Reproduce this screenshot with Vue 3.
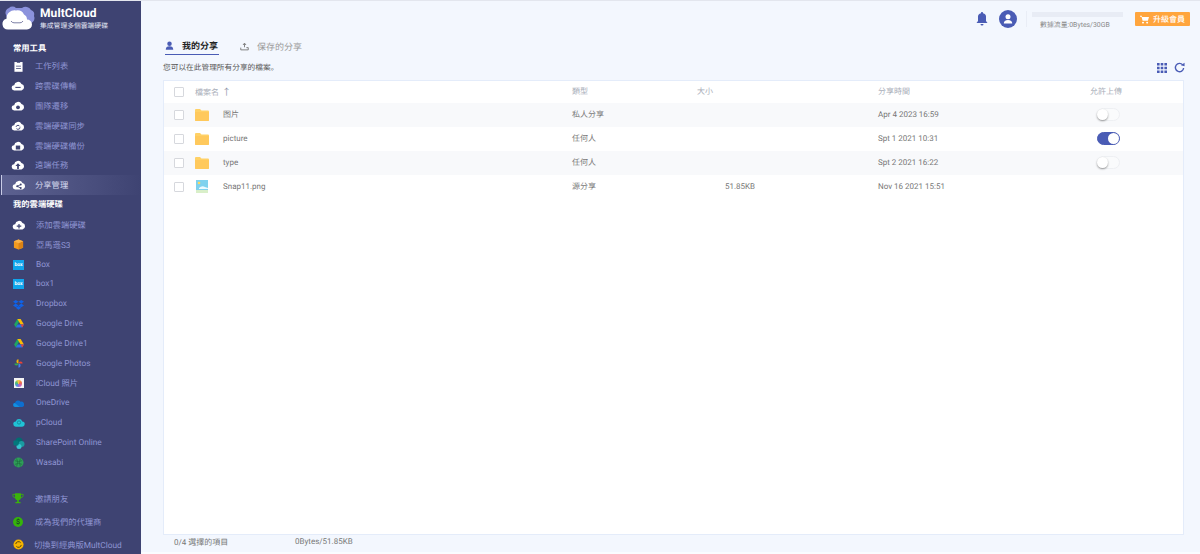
<script setup>
const cloud = 'M4 13a3 3 0 0 1-.4-6A4.5 4.5 0 0 1 12 5.6 3.8 3.8 0 0 1 12 13z'
const tools = [
  { t: '工作列表', i: 'list' },
  { t: '跨雲碟傳輸', i: 'transfer' },
  { t: '團隊遷移', i: 'team' },
  { t: '雲端硬碟同步', i: 'sync' },
  { t: '雲端硬碟備份', i: 'backup' },
  { t: '遠端任務', i: 'up' },
  { t: '分享管理', i: 'share', active: true },
]
const drives = [
  { t: '添加雲端硬碟', i: 'add' },
  { t: '亞馬遜S3', i: 's3' },
  { t: 'Box', i: 'box' },
  { t: 'box1', i: 'box' },
  { t: 'Dropbox', i: 'dropbox' },
  { t: 'Google Drive', i: 'gdrive' },
  { t: 'Google Drive1', i: 'gdrive' },
  { t: 'Google Photos', i: 'photos' },
  { t: 'iCloud 照片', i: 'icloud' },
  { t: 'OneDrive', i: 'onedrive' },
  { t: 'pCloud', i: 'pcloud' },
  { t: 'SharePoint Online', i: 'sharepoint' },
  { t: 'Wasabi', i: 'wasabi' },
]
const extras = [
  { t: '邀請朋友', i: 'trophy' },
  { t: '成為我們的代理商', i: 'dollar' },
  { t: '切換到經典版MultCloud', i: 'switch' },
]
const files = [
  { name: '图片', kind: 'folder', type: '私人分享', size: '', time: 'Apr 4 2023 16:59', toggle: false },
  { name: 'picture', kind: 'folder', type: '任何人', size: '', time: 'Spt 1 2021 10:31', toggle: true },
  { name: 'type', kind: 'folder', type: '任何人', size: '', time: 'Spt 2 2021 16:22', toggle: false },
  { name: 'Snap11.png', kind: 'image', type: '源分享', size: '51.85KB', time: 'Nov 16 2021 15:51', toggle: null },
]
</script>

<template>
  <div class="app">
    <aside class="sidebar">
      <div class="logo">
        <svg class="logo-mark" viewBox="0 0 36 30" width="36" height="30">
          <path d="M5 14a5 5 0 0 1 3-7 5 5 0 0 1 7 0h6a6 6 0 0 1 9 2 5 5 0 0 1 3 6 5 5 0 0 1-3 7H8z" fill="#8b92dc" />
          <path d="M7 28.500a5.500 5.500 0 0 1-1.500-10.800A8 8 0 0 1 15 9.500a7.500 7.500 0 0 1 8 4 5.500 5.500 0 0 1 3 5 5 5 0 0 1 0 10z" fill="#fff" />
          <path d="M10 20q1 1.800 3 1.800h6q2 0 3-1.800" fill="none" stroke="#7d80a6" stroke-width="1" />
        </svg>
        <div class="logo-text">
          <div class="brand">MultCloud</div>
          <div class="slogan">集成管理多個雲端硬碟</div>
        </div>
      </div>

      <div class="section">常用工具</div>
      <div v-for="item in tools" :key="item.t" class="nav tool" :class="{ active: item.active }">
        <span class="nav-icon">
          <svg v-if="item.i === 'list'" viewBox="0 0 16 16" width="13" height="13">
            <path d="M3 2.500h10v12H3z" fill="#fff" />
            <path d="M6 1.500h4v2H6zM5 7h6v1H5zM5 10h6v1H5z" fill="#3e4372" />
          </svg>
          <svg v-else viewBox="0 0 16 16" width="14" height="14">
            <path :d="cloud" fill="#fff" />
            <path v-if="item.i === 'transfer'" d="M5 9h6v1.200H5z" fill="#3e4372" />
            <circle v-if="item.i === 'team'" cx="8" cy="9.500" r="2.200" fill="#3e4372" />
            <circle v-if="item.i === 'sync'" cx="8" cy="9.500" r="2.300" fill="none" stroke="#3e4372" stroke-width="1.100" stroke-dasharray="5 2" />
            <path v-if="item.i === 'backup'" d="M5.500 7.500h5v4.500h-5z" fill="#3e4372" />
            <path v-if="item.i === 'up'" d="M8 6l3 3H9v3.500H7V9H5z" fill="#3e4372" />
            <path v-if="item.i === 'share'" d="M6 9.500l4-2M6 9.500l4 2" stroke="#3e4372" stroke-width="1" fill="none" />
            <g v-if="item.i === 'share'" fill="#3e4372"><circle cx="6" cy="9.500" r="1.200" /><circle cx="10" cy="7.500" r="1.100" /><circle cx="10" cy="11.500" r="1.100" /></g>
          </svg>
        </span>
        <span class="nav-label">{{ item.t }}</span>
      </div>

      <div class="section section-2">我的雲端硬碟</div>
      <div v-for="item in drives" :key="item.t" class="nav">
        <span class="nav-icon">
          <svg v-if="item.i === 'add'" viewBox="0 0 16 16" width="14" height="14">
            <path :d="cloud" fill="#fff" />
            <path d="M7.300 6.800h1.400v1.900h1.900v1.400H8.700V12H7.300v-1.900H5.400V8.700h1.900z" fill="#3e4372" />
          </svg>
          <svg v-else-if="item.i === 's3'" viewBox="0 0 12 12" width="11" height="11">
            <path d="M6 .5l5 2v7l-5 2-5-2v-7z" fill="#f29a1f" />
            <path d="M6 4.500l5-2v7l-5 2z" fill="#db8215" />
            <path d="M1 2.500l5 2 5-2-5-2z" fill="#f9b24a" />
          </svg>
          <span v-else-if="item.i === 'box'" class="box-tile">box</span>
          <svg v-else-if="item.i === 'dropbox'" viewBox="0 0 12 12" width="11" height="11" fill="#0f62e8">
            <path d="M3 1l3 2-3 2-3-2zM9 1l3 2-3 2-3-2zM3 5l3 2-3 2-3-2zM9 5l3 2-3 2-3-2zM6 7.600l3 2-3 2-3-2z" />
          </svg>
          <svg v-else-if="item.i === 'gdrive'" viewBox="0 0 12 11" width="10" height="9">
            <path d="M4 0h4L4.200 6.800l-2 3.700L0 6.800z" fill="#1fa463" />
            <path d="M4 0h4l4 6.800H8z" fill="#fbbc04" />
            <path d="M2 10.500L4.200 6.800H12l-2 3.700z" fill="#2a71e6" />
            <path d="M8 6.800h4l-2 3.700z" fill="#ea4335" />
          </svg>
          <svg v-else-if="item.i === 'photos'" viewBox="0 0 12 12" width="9" height="9">
            <path d="M6 6V0.500A2.750 2.750 0 0 0 3.200 3.200 2.750 2.750 0 0 0 6 6z" fill="#f4b400" />
            <path d="M6 6h5.500A2.750 2.750 0 0 0 8.800 3.200 2.750 2.750 0 0 0 6 6z" fill="#ea4335" />
            <path d="M6 6v5.500A2.750 2.750 0 0 0 8.800 8.800 2.750 2.750 0 0 0 6 6z" fill="#4285f4" />
            <path d="M6 6H.5a2.750 2.750 0 0 0 2.700 2.800A2.750 2.750 0 0 0 6 6z" fill="#34a853" />
          </svg>
          <span v-else-if="item.i === 'icloud'" class="icloud-tile"><i></i></span>
          <svg v-else-if="item.i === 'onedrive'" viewBox="0 0 16 10" width="11" height="7">
            <path d="M3 10a3 3 0 0 1 0-6 4.500 4.500 0 0 1 8-1.500A3.500 3.500 0 0 1 13.500 10z" fill="#0d6fd0" />
            <path d="M3 10a3 3 0 0 1-.5-5.800L10 10z" fill="#1490df" />
          </svg>
          <svg v-else-if="item.i === 'pcloud'" viewBox="0 0 16 11" width="12" height="9">
            <path d="M4 11a3.500 3.500 0 0 1-.3-7 4.500 4.500 0 0 1 8.600 0 3.500 3.500 0 0 1-.3 7z" fill="#20c3d6" />
            <circle cx="8" cy="5.500" r="2.200" fill="none" stroke="#137d90" stroke-width="1" />
          </svg>
          <svg v-else-if="item.i === 'sharepoint'" viewBox="0 0 12 12" width="12" height="12">
            <circle cx="6" cy="4" r="3.500" fill="#036c70" />
            <circle cx="8.500" cy="7" r="3" fill="#1a9ba1" />
            <circle cx="6" cy="9.500" r="2.500" fill="#37c6d0" />
            <rect x="0.500" y="3.500" width="5" height="5" rx="0.800" fill="#03787c" />
          </svg>
          <svg v-else-if="item.i === 'wasabi'" viewBox="0 0 12 12" width="11" height="11">
            <circle cx="6" cy="6" r="5.500" fill="#2f9e59" />
            <path d="M2 4q4 2 8 0M2 8q4-2 8 0M4 1.500q2 4 0 9M8 1.500q-2 4 0 9" stroke="#1e6f3e" stroke-width=".8" fill="none" />
          </svg>
        </span>
        <span class="nav-label">{{ item.t }}</span>
      </div>

      <div class="extras">
        <div v-for="item in extras" :key="item.t" class="nav extra">
          <span class="nav-icon">
            <svg v-if="item.i === 'trophy'" viewBox="0 0 14 12" width="12" height="11">
              <path d="M3.500 0h7v4.500a3.500 3.500 0 0 1-7 0zM6 7.500h2V10h2v1.500H4V10h2z" fill="#3bb30b" />
              <path d="M3.500 1.200H1v1.500q0 2 3 2.500M10.500 1.200H13v1.500q0 2-3 2.500" stroke="#3bb30b" fill="none" />
            </svg>
            <span v-else-if="item.i === 'dollar'" class="coin green">$</span>
            <svg v-else viewBox="0 0 12 12" width="11" height="11">
              <circle cx="6" cy="6" r="5.500" fill="#f5b301" />
              <path d="M3 5.500a3 3 0 0 1 5.300-1.500M9 6.500a3 3 0 0 1-5.300 1.500" stroke="#4a3d10" fill="none" />
            </svg>
          </span>
          <span class="nav-label" :class="{ 'switch-label': item.i === 'switch' }">{{ item.t }}</span>
        </div>
      </div>
    </aside>

    <main class="main">
      <header class="topbar">
        <svg class="bell" viewBox="0 0 12 14" width="12" height="14">
          <path d="M6 0a1 1 0 0 1 1 1.200A4 4 0 0 1 10 5.500V9l1.500 2h-11L2 9V5.500a4 4 0 0 1 3-4.300A1 1 0 0 1 6 0zM4.500 12h3a1.500 1.500 0 0 1-3 0z" fill="#4a5cb5" />
        </svg>
        <svg class="avatar" viewBox="0 0 18 18" width="18" height="18">
          <circle cx="9" cy="9" r="9" fill="#4a5cb5" />
          <circle cx="9" cy="6.800" r="2.500" fill="#fff" />
          <path d="M4.800 13.500q0-3.500 4.200-3.500t4.200 3.500z" fill="#fff" />
        </svg>
        <div class="divider"></div>
        <div class="traffic">
          <div class="traffic-bar"></div>
          <div class="traffic-text">數據流量:0Bytes/30GB</div>
        </div>
        <div class="upgrade">
          <svg viewBox="0 0 12 12" width="9" height="9">
            <path d="M0 1h2.300l.5 1.500H12l-1.500 5H3.500L2 2.200H0zM4 9a1.200 1.200 0 1 0 .01 0zM9.500 9a1.200 1.200 0 1 0 .01 0z" fill="#fff" />
          </svg>
          <span>升級會員</span>
        </div>
      </header>

      <nav class="tabs">
        <div class="tab on">
          <svg viewBox="0 0 12 12" width="9" height="9">
            <circle cx="6" cy="3.500" r="3" fill="#4a5cb5" />
            <path d="M1 11.500q0-4.500 5-4.500t5 4.500z" fill="#4a5cb5" />
          </svg>
          <span>我的分享</span>
        </div>
        <div class="tab">
          <svg viewBox="0 0 12 12" width="9" height="9">
            <path d="M1 7.500v3h10v-3H8.500M6 7V2M4 4l2-2.500L8 4" stroke="#777" stroke-width="1.200" fill="none" />
          </svg>
          <span>保存的分享</span>
        </div>
      </nav>

      <div class="tools">
        <p class="desc">您可以在此管理所有分享的檔案。</p>
        <div class="tool-icons">
          <svg viewBox="0 0 10 10" width="10" height="10" fill="#4a5cb5">
            <path d="M0 0h2.600v2.600H0zM3.700 0h2.600v2.600H3.700zM7.400 0H10v2.600H7.400zM0 3.700h2.600v2.600H0zM3.700 3.700h2.600v2.600H3.700zM7.400 3.700H10v2.600H7.400zM0 7.400h2.600V10H0zM3.700 7.400h2.600V10H3.700zM7.400 7.400H10V10H7.400z" />
          </svg>
          <svg viewBox="0 0 12 12" width="11" height="11">
            <path d="M9.500 3.200A4.500 4.500 0 1 0 10.500 6.500" stroke="#4a5cb5" stroke-width="1.500" fill="none" />
            <path d="M7.500 3.500L11.500 4.500V.8z" fill="#4a5cb5" />
          </svg>
        </div>
      </div>

      <section class="panel">
        <div class="row head">
          <span class="check"></span>
          <span class="name-head">檔案名 <b>↑</b></span>
          <span>類型</span>
          <span>大小</span>
          <span>分享時間</span>
          <span>允許上傳</span>
        </div>
        <div v-for="(f, idx) in files" :key="f.name" class="row body" :class="{ odd: idx % 2 === 0 }">
          <span class="check"></span>
          <span class="name-cell">
            <span class="file-icon">
              <svg v-if="f.kind === 'folder'" viewBox="0 0 14 12" width="14" height="12">
                <path d="M0 1a1 1 0 0 1 1-1h4l1.500 1.500H13a1 1 0 0 1 1 1V11a1 1 0 0 1-1 1H1a1 1 0 0 1-1-1z" fill="#ffd166" />
                <path d="M0 3h14v8a1 1 0 0 1-1 1H1a1 1 0 0 1-1-1z" fill="#ffc95c" />
              </svg>
              <svg v-else viewBox="0 0 12 13" width="12" height="13">
                <rect width="12" height="13" fill="#7fd2ee" />
                <rect y="10" width="12" height="3" fill="#d9efc9" />
                <circle cx="3" cy="3" r="1.300" fill="#ffd95e" />
                <path d="M3 8q3-3 6-1l3 1v1H3z" fill="#eafaff" />
              </svg>
            </span>
            <span class="fname">{{ f.name }}</span>
          </span>
          <span>{{ f.type }}</span>
          <span class="size">{{ f.size }}</span>
          <span>{{ f.time }}</span>
          <span class="toggle-cell">
            <span v-if="f.toggle !== null" class="toggle" :class="{ on: f.toggle }"><i></i></span>
          </span>
        </div>
      </section>

      <footer class="foot">
        <span class="foot-a">0/4 選擇的項目</span>
        <span class="foot-b">0Bytes/51.85KB</span>
      </footer>
    </main>
  </div>
</template>

<style>
html, body { margin: 0; background: #f3f7fe; }
</style>

<style scoped>
.app {
  display: flex;
  height: 554px;
  width: 1200px;
  box-sizing: border-box;
  border-top: 1px solid #e3e6ee;
  overflow: hidden;
  font-family: Roboto, "Noto Sans CJK SC", sans-serif;
  font-size: 8px;
  color: #777;
  text-rendering: geometricPrecision;
}
.sidebar {
  width: 141px;
  flex: none;
  background: #3e4372;
  display: flex;
  flex-direction: column;
  color: #8f95d2;
}
.logo {
  height: 40px;
  display: flex;
  align-items: flex-start;
  gap: 3px;
  padding-left: 1px;
  flex: none;
  box-sizing: border-box;
}
.logo-mark { flex: none; }
.logo-text { padding-top: 5px; }
.brand { font-size: 12px; font-weight: 700; color: #fff; line-height: 14px; letter-spacing: .1px; }
.slogan { font-size: 6.800px; color: #e6e8f6; line-height: 10px; margin-top: 1px; }
.section {
  height: 14.500px;
  line-height: 15px;
  margin-top: 1px;
  padding-left: 13px;
  color: #fff;
  font-size: 8.300px;
  font-weight: 700;
  flex: none;
}
.section-2 { height: 19px; line-height: 19px; }
.nav {
  height: 19.800px;
  display: flex;
  align-items: center;
  flex: none;
  font-size: 8.300px;
}
.nav.active {
  background: linear-gradient(90deg, #5c6190, #484d7c 70%, #3e4372);
  border-left: 1px solid #c9cce6;
  margin-left: 1px;
  color: #d4d6ee;
}
.nav-icon {
  width: 36px;
  padding-left: 1px;
  display: flex;
  justify-content: center;
  align-items: center;
  flex: none;
  box-sizing: border-box;
}
.tool .nav-icon { width: 35px; }
.tool.active .nav-icon { width: 33px; }
.box-tile {
  width: 11px;
  height: 10px;
  background: #10a5ec;
  color: #fff;
  font-size: 5px;
  line-height: 10px;
  text-align: center;
  font-weight: 700;
}
.icloud-tile {
  width: 10px;
  height: 10px;
  background: #f4f4f4;
  display: flex;
  align-items: center;
  justify-content: center;
}
.icloud-tile i {
  width: 7px;
  height: 7px;
  border-radius: 50%;
  background: conic-gradient(#f6c444, #ef6a4a, #c85cc9, #4a8fe8, #4dc26a, #f6c444);
}
.extras { margin-top: auto; margin-bottom: -2px; }
.extra { height: 23px; }
.extra .nav-icon { width: 35px; }
.switch-label { margin-left: -1px; }
.coin {
  width: 10px;
  height: 10px;
  border-radius: 50%;
  color: #123;
  font-size: 7px;
  line-height: 10px;
  text-align: center;
}
.coin.green { background: #35b40a; }
.main {
  flex: 1;
  min-width: 0;
  display: flex;
  flex-direction: column;
  padding: 0 16px 0 22px;
  background: #f3f7fe;
  border-bottom: 2px solid #fafcff;
}
.topbar {
  height: 36px;
  display: flex;
  align-items: center;
  flex: none;
  justify-content: flex-end;
  margin-right: -6px;
}
.bell { margin-right: 11px; }
.avatar { margin-right: 9px; }
.divider { width: 1px; height: 16px; background: #e9edf6; margin-right: 5px; }
.traffic { width: 91px; margin-right: 12px; align-self: flex-start; margin-top: 11px; }
.traffic-bar { height: 5px; background: #e8ecf5; }
.traffic-text { font-size: 6.900px; color: #888; padding-left: 8px; line-height: 12px; margin-top: 2px; }
.upgrade {
  width: 55px;
  height: 14px;
  background: #ffa53d;
  color: #fff;
  border-radius: 1px;
  display: flex;
  align-items: center;
  justify-content: center;
  gap: 4px;
  font-size: 8px;
  font-weight: 500;
}
.tabs {
  display: flex;
  gap: 21px;
  height: 18px;
  flex: none;
  padding-left: 2px;
}
.tab {
  display: flex;
  align-items: center;
  gap: 8px;
  height: 18px;
  color: #999;
  font-size: 9px;
  box-sizing: border-box;
}
.tab.on {
  color: #222;
  font-weight: 700;
  border-bottom: 1.500px solid #4a5cb5;
  width: 54px;
  white-space: nowrap;
}
.tools {
  display: flex;
  justify-content: space-between;
  align-items: center;
  height: 25px;
  flex: none;
}
.desc { margin: 0; font-size: 7.700px; color: #555; }
.tool-icons {
  display: flex;
  align-items: center;
  gap: 7px;
  margin-right: -1px;
}
.panel {
  flex: 1;
  background: #fff;
  border: 1px solid #e4ecfa;
  min-height: 0;
}
.row {
  display: grid;
  grid-template-columns: 21px 377px 125px 181px 212px 1fr;
  padding-left: 10px;
  align-items: center;
}
.head { height: 21.500px; color: #a8adb8; }
.body { height: 24px; color: #777; }
.body.odd { background: #f8f9fb; }
.check {
  width: 8px;
  height: 8px;
  border: 1px solid #d6d8dd;
  background: #fff;
  border-radius: 1px;
  box-sizing: content-box;
}
.name-head b { font-weight: 400; color: #8a93a6; margin-left: 1px; font-size: 9px; }
.name-cell { display: flex; align-items: center; }
.file-icon { width: 14px; display: flex; justify-content: center; }
.fname { margin-left: 14px; }
.size { padding-left: 28px; }
.toggle-cell { padding-left: 7px; display: flex; }
.toggle {
  width: 23px;
  height: 13px;
  border-radius: 7px;
  background: #fafbfc;
  border: 1px solid #eef0f3;
  box-sizing: border-box;
  position: relative;
  display: block;
}
.toggle i {
  position: absolute;
  left: -1px;
  top: 0;
  width: 11px;
  height: 11px;
  border-radius: 50%;
  background: #fff;
  box-shadow: 0 1px 2px rgba(0, 0, 0, .4);
}
.toggle.on { background: #4a5cb5; border-color: #4a5cb5; }
.toggle.on i { left: 10px; box-shadow: none; }
.foot {
  height: 17px;
  flex: none;
  display: flex;
  align-items: flex-start;
  padding-left: 11px;
  padding-top: 3px;
  box-sizing: border-box;
  font-size: 8px;
  line-height: 10px;
  color: #777;
}
.foot-a { width: 121px; }
.foot-b { margin-top: -1px; }
</style>
